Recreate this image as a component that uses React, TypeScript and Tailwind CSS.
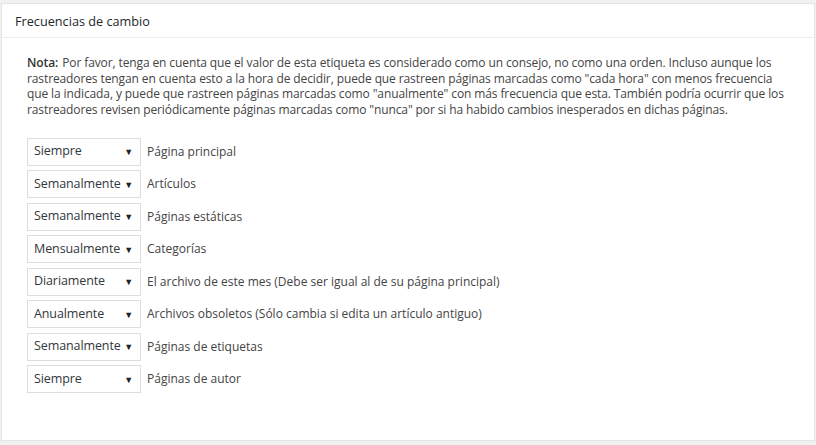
import React from "react";

const rows: { value: string; label: string }[] = [
  { value: "Siempre", label: "Página principal" },
  { value: "Semanalmente", label: "Artículos" },
  { value: "Semanalmente", label: "Páginas estáticas" },
  { value: "Mensualmente", label: "Categorías" },
  { value: "Diariamente", label: "El archivo de este mes (Debe ser igual al de su página principal)" },
  { value: "Anualmente", label: "Archivos obsoletos (Sólo cambia si edita un artículo antiguo)" },
  { value: "Semanalmente", label: "Páginas de etiquetas" },
  { value: "Siempre", label: "Páginas de autor" },
];

function Select({ value }: { value: string }) {
  return (
    <div className="flex h-[28px] w-[114px] shrink-0 items-center justify-between border border-[#dddddd] bg-white pl-[6px] pr-[7px] text-[12.5px] tracking-[-0.1px] text-[#32373c]">
      <span>{value}</span>
      <span className="text-[9px] text-[#222]">▼</span>
    </div>
  );
}

export default function App() {
  return (
    <div
      className="h-[445px] w-[816px] bg-[#f1f1f1] px-[1px] pt-[3px]"
      style={{ fontFamily: '"Open Sans", "Noto Sans", sans-serif' }}
    >
      <div className="h-[438px] border border-[#e5e5e5] bg-white">
        <div className="flex h-[34px] items-center border-b border-[#eeeeee] pl-[13px] pt-[3px] text-[12.7px] text-[#23282d]">
          Frecuencias de cambio
        </div>
        <div className="px-[25px] pt-[17px]">
          <p className="text-[12px] leading-[15.7px] tracking-[-0.11px] text-[#444]">
            <strong className="mr-[1px] font-semibold text-[#333]">Nota:</strong> Por favor, tenga en cuenta que el valor de esta etiqueta es considerado como un consejo, no como una orden. Incluso aunque los rastreadores tengan en cuenta esto a la hora de decidir, puede que rastreen páginas marcadas como "cada hora" con menos frecuencia que la indicada, y puede que rastreen páginas marcadas como "anualmente" con más frecuencia que esta. También podría ocurrir que los rastreadores revisen periódicamente páginas marcadas como "nunca" por si ha habido cambios inesperados en dichas páginas.
          </p>
          <div className="mt-[20px] flex flex-col gap-[4.5px]">
            {rows.map((r, i) => (
              <div key={i} className="flex items-center gap-[6px]">
                <Select value={r.value} />
                <span className="text-[12px] text-[#444]">{r.label}</span>
              </div>
            ))}
          </div>
        </div>
      </div>
    </div>
  );
}
